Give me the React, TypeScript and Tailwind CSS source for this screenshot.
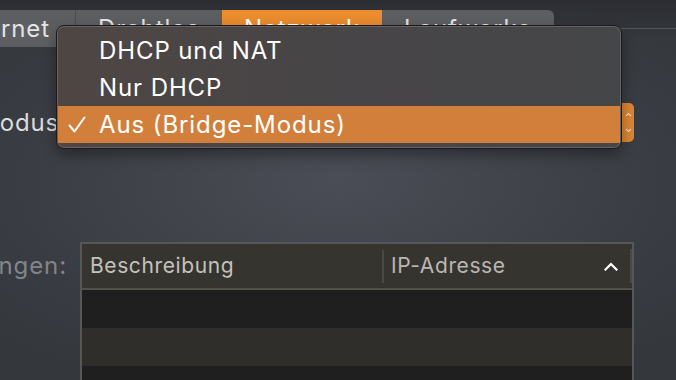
import React from 'react';

const tabs = [
  { label: 'Ethernet', w: 'w-[75px]', active: false },
  { label: 'Drahtlos', w: 'w-[147px]', active: false },
  { label: 'Netzwerk', w: 'w-[160px]', active: true },
  { label: 'Laufwerke', w: 'w-[172px]', active: false },
];

const options = ['DHCP und NAT', 'Nur DHCP', 'Aus (Bridge-Modus)'];

const Check: React.FC = () => (
  <svg width="18" height="17" viewBox="0 0 18 17" fill="none">
    <path d="M1.5 9.5 L6.5 15.5 L16.5 1.5" stroke="white" strokeWidth="2" strokeLinecap="round" strokeLinejoin="round" />
  </svg>
);

const App: React.FC = () => {
  const selected = 2;

  return (
    <div className="relative w-[676px] h-[380px] overflow-hidden font-['Inter','Noto_Sans',sans-serif] bg-[radial-gradient(ellipse_70%_60%_at_50%_48%,#4a4d55,#393c42_70%,#34373c)]">
      <div className="absolute inset-x-0 top-0 h-[40px] bg-gradient-to-b from-[#2b2d32] to-transparent" />

      {/* tab bar straddling the box border */}
      <div className="relative flex items-center pt-[10px]">
        <div className="flex h-[37px] rounded-tr-[6px] overflow-hidden bg-[#5c5e62]">
          {tabs.map((t, i) => (
            <div
              key={t.label}
              className={`${t.w} flex items-center overflow-hidden whitespace-nowrap text-[24px] tracking-[0.9px] ${
                i === 0 ? 'justify-end pr-[25px]' : 'justify-center'
              } ${t.active ? 'bg-gradient-to-b from-[#ec8d2f] to-[#e3852b] text-white' : 'text-[#e4e4e4]'} ${
                i > 0 && !t.active && !tabs[i - 1].active ? 'border-l border-[#4a4c50]' : ''
              }`}
            >
              {t.label}
            </div>
          ))}
        </div>
        <div className="flex-1 h-px bg-[#55575c]" />
      </div>

      {/* form rows */}
      <div className="flex flex-col">
        <div className="flex items-center mt-[56px] h-[39px]">
          <div className="w-[67px] flex justify-end whitespace-nowrap text-[24px] tracking-[0.9px] text-[#dcdcdc]">Router-Modus:</div>
          <div className="ml-[14px] w-[553px] h-[39px] rounded-[5px] bg-[#dc8533] flex items-center justify-end pr-[2px]">
            <div className="flex flex-col gap-[3px] text-white text-[9px] leading-[8px]">
              <span>⌃</span>
              <span className="rotate-180">⌃</span>
            </div>
          </div>
        </div>

        <div className="flex items-start mt-[100px]">
          <div className="w-[67px] h-[44px] flex items-center justify-end whitespace-nowrap text-[24px] tracking-[0.9px] text-[#838589] mt-[2px]">
            DHCP-Reservierungen:
          </div>
          <div className="ml-[13px] w-[554px] border-2 border-[#57575a] border-b-0 bg-[#1f1f1f]">
            <div className="h-[46px] bg-[#36342f] border-b-2 border-[#53514d] flex items-center text-[21px] tracking-[0.6px] text-[#c4c2be]">
              <div className="w-[302px] pl-[8px] flex items-center justify-between h-full">
                <span>Beschreibung</span>
                <div className="w-[2px] h-[33px] bg-[#4b4945]" />
              </div>
              <div className="flex-1 pl-[7px] flex items-center h-full text-[#b9b7b3]">
                <span>IP-Adresse</span>
                <svg className="ml-auto mr-[12px]" width="14" height="9" viewBox="0 0 14 9" fill="none">
                  <path d="M1.5 7.5 L7 2 L12.5 7.5" stroke="white" strokeWidth="2.2" strokeLinecap="square" />
                </svg>
                <div className="w-[2px] h-[34px] bg-[#4b4945]" />
              </div>
            </div>
            <div className="h-[38px] bg-[#1f1f1f]" />
            <div className="h-[38px] bg-[#302e2b]" />
            <div className="h-[38px] bg-[#1f1f1f]" />
          </div>
        </div>
      </div>

      {/* open popup menu */}
      <div className="absolute left-[56px] top-[25px] w-[566px] h-[124px] rounded-[8px] border border-[#1b1b1b] bg-[linear-gradient(90deg,#4e4643,#484547_45%,#454648)] shadow-[inset_0_0_0_1px_rgba(255,255,255,0.16),0_6px_14px_rgba(0,0,0,0.35)] pt-[6px] pb-[4px] px-px">
        {options.map((o, i) => (
          <div
            key={o}
            className={`h-[37px] flex items-center text-[24px] tracking-[0.9px] text-white whitespace-nowrap ${
              i === selected ? 'bg-[#d27f3b]' : ''
            }`}
          >
            <div className="w-[41px] pl-[10px] flex items-center">{i === selected && <Check />}</div>
            <span>{o}</span>
          </div>
        ))}
      </div>
    </div>
  );
};

export default App;
